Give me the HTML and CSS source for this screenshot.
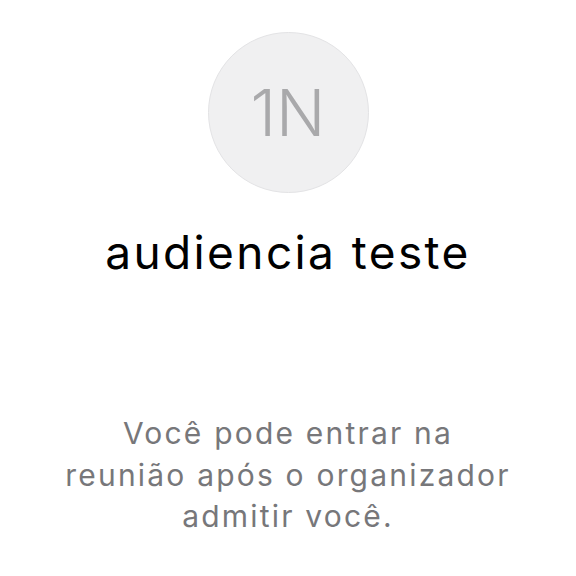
FILE: index.html
```html
<!DOCTYPE html>
<html lang="pt">
<head>
  <meta charset="UTF-8" />
  <title>Sala de espera</title>
  <link rel="stylesheet" href="styles.css">
</head>
<body>
  <div class="lobby">
    <div class="avatar">1N</div>
    <h1 class="meeting-title">audiencia teste</h1>
    <p class="waiting-text">Você pode entrar na reunião após o organizador admitir você.</p>
  </div>
</body>
</html>
```

FILE: styles.css
```css
body {
  margin: 0;
  background: #fff;
  font-family: Inter, 'Noto Sans', sans-serif;
}

.lobby {
  display: flex;
  flex-direction: column;
  align-items: center;
  padding-top: 32px;
}

.avatar {
  width: 159px;
  height: 159px;
  border-radius: 50%;
  background: #f0f0f1;
  border: 1px solid #e3e3e5;
  display: flex;
  align-items: center;
  justify-content: center;
  font-size: 65px;
  font-weight: 300;
  color: #a9a9ab;
}

.meeting-title {
  margin: 33px 0 0;
  font-size: 46px;
  font-weight: 400;
  line-height: 52px;
  letter-spacing: 2.4px;
  color: #000;
}

.waiting-text {
  margin: 135px 0 0;
  width: 452px;
  text-align: center;
  font-size: 30px;
  line-height: 41.5px;
  letter-spacing: 2.2px;
  color: #77777a;
}
```
